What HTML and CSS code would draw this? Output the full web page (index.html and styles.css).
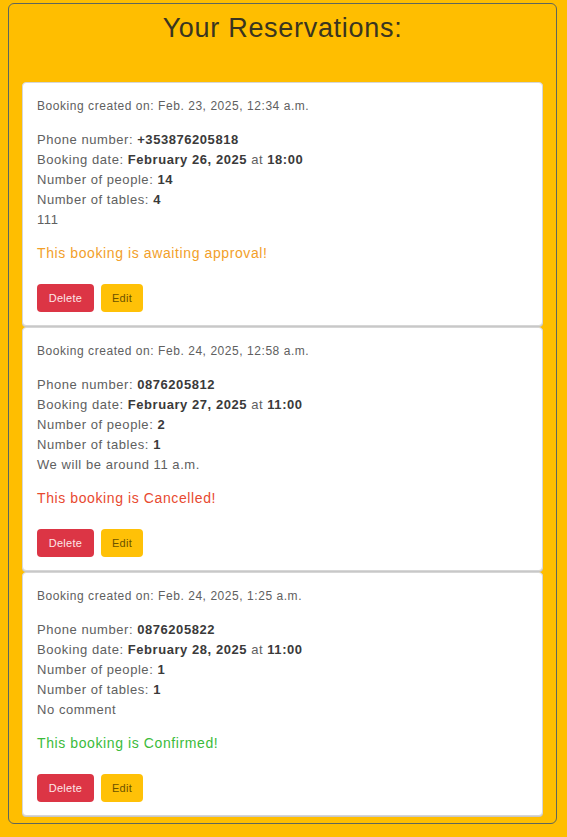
FILE: index.html
```html
<!DOCTYPE html>
<html lang="en">
<head>
<meta charset="utf-8">
<title>Your Reservations</title>
<link rel="stylesheet" href="styles.css">
</head>
<body>
<div class="wrap">
  <h1 class="title">Your Reservations:</h1>
  <div class="card">
    <p class="created">Booking created on: Feb. 23, 2025, 12:34 a.m.</p>
    <div class="details">
      <div>Phone number: <b>+353876205818</b></div>
      <div>Booking date: <b>February 26, 2025</b> at <b>18:00</b></div>
      <div>Number of people: <b>14</b></div>
      <div>Number of tables: <b>4</b></div>
      <div>111</div>
    </div>
    <p class="status pending">This booking is awaiting approval!</p>
    <div class="actions">
      <button class="btn btn-delete">Delete</button>
      <button class="btn btn-edit">Edit</button>
    </div>
  </div>
  <div class="card">
    <p class="created">Booking created on: Feb. 24, 2025, 12:58 a.m.</p>
    <div class="details">
      <div>Phone number: <b>0876205812</b></div>
      <div>Booking date: <b>February 27, 2025</b> at <b>11:00</b></div>
      <div>Number of people: <b>2</b></div>
      <div>Number of tables: <b>1</b></div>
      <div>We will be around 11 a.m.</div>
    </div>
    <p class="status cancelled">This booking is Cancelled!</p>
    <div class="actions">
      <button class="btn btn-delete">Delete</button>
      <button class="btn btn-edit">Edit</button>
    </div>
  </div>
  <div class="card">
    <p class="created">Booking created on: Feb. 24, 2025, 1:25 a.m.</p>
    <div class="details">
      <div>Phone number: <b>0876205822</b></div>
      <div>Booking date: <b>February 28, 2025</b> at <b>11:00</b></div>
      <div>Number of people: <b>1</b></div>
      <div>Number of tables: <b>1</b></div>
      <div>No comment</div>
    </div>
    <p class="status confirmed">This booking is Confirmed!</p>
    <div class="actions">
      <button class="btn btn-delete">Delete</button>
      <button class="btn btn-edit">Edit</button>
    </div>
  </div>
</div>
</body>
</html>
```
FILE: styles.css
```css
* { box-sizing: border-box; }
html, body { margin: 0; padding: 0; }
body {
  background: #ffbe00;
  font-family: "Liberation Sans", Arial, sans-serif;
  color: #555;
}
.wrap {
  margin: 3px 10px 0 8px;
  border: 1px solid #5f665a;
  border-radius: 6px;
  padding: 0 13px 7px;
}
.title {
  margin: 9px 0 39px;
  font-size: 27px;
  line-height: 30px;
  font-weight: 400;
  text-align: center;
  color: #3a3520;
  letter-spacing: 0.7px;
}
.card {
  background: #fff;
  border: 1px solid #d6d6d6;
  border-radius: 4px;
  padding: 15px 14px 12px;
  height: 244px;
  box-shadow: 0 1px 0 #c8c8c8;
}
.card + .card { margin-top: 1px; }
.created {
  margin: 0 0 16px;
  font-size: 12px;
  line-height: 16px;
  color: #606060;
  letter-spacing: 0.55px;
}
.details {
  font-size: 13px;
  line-height: 20px;
  color: #606060;
  letter-spacing: 0.55px;
}
.details b {
  font-weight: 700;
  color: #3a3a3a;
}
.status {
  margin: 13px 0 21px;
  font-size: 14px;
  line-height: 20px;
  letter-spacing: 0.6px;
}
.pending { color: #f2a02a; }
.cancelled { color: #e8492f; }
.confirmed { color: #3bbb3b; }
.actions { display: flex; gap: 7px; }
.btn {
  height: 28px;
  border: none;
  border-radius: 4px;
  font-family: inherit;
  font-size: 11px;
  letter-spacing: 0.3px;
  padding: 0;
}
.btn-delete { width: 57px; background: #dc3545; color: #fce6e8; }
.btn-edit { width: 42px; background: #ffc107; color: #6b5200; }
```
